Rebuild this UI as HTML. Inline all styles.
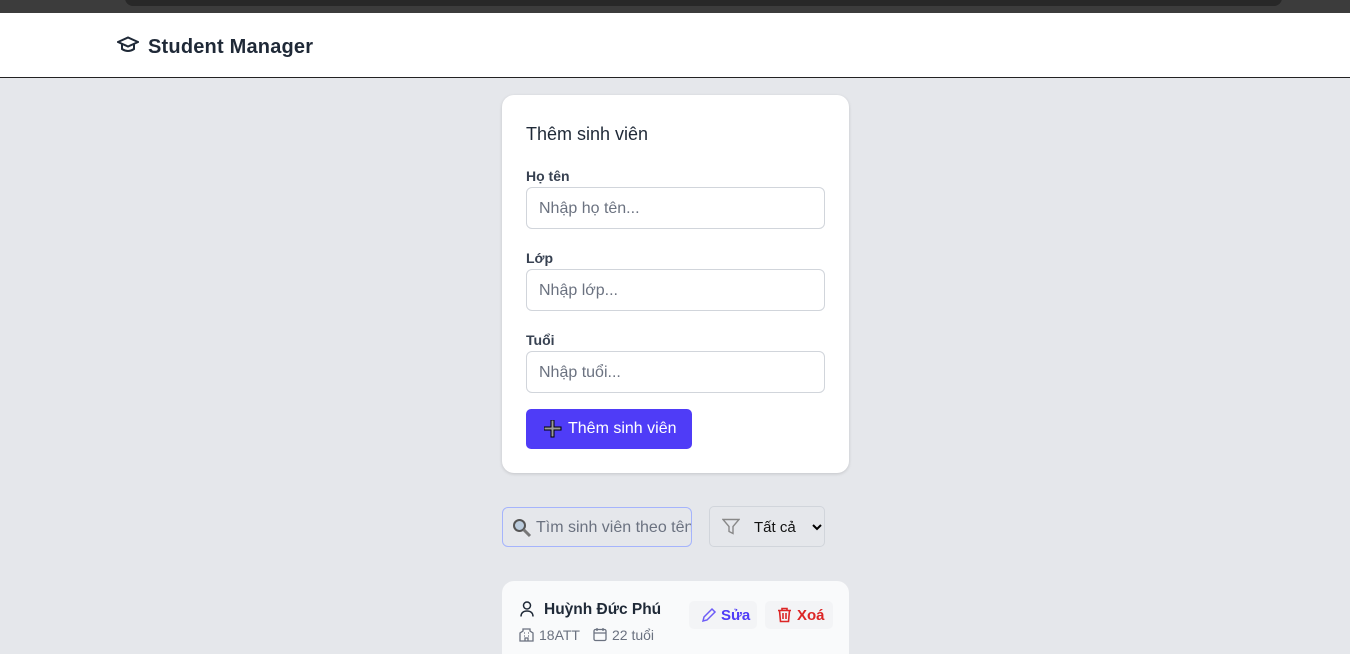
<!DOCTYPE html>
<html><head><meta charset="utf-8"><style>
*{box-sizing:border-box;margin:0;padding:0}
html,body{width:1350px;height:654px;overflow:hidden}
body{background:#e5e7eb;font-family:"Liberation Sans","DejaVu Sans",sans-serif;position:relative;color:#1f2937}
.top{position:absolute;left:0;top:0;width:1350px;height:13px;background:#3c3c3c}
.top .bar{position:absolute;left:125px;top:-10px;width:1157px;height:16px;background:#282828;border-radius:8px}
.hdr{position:absolute;top:13px;left:0;width:1350px;height:65px;background:#fff;border-bottom:1px solid #222}
.hdr .t{position:absolute;left:148px;top:23px;font-size:20px;font-weight:bold;color:#1f2937;letter-spacing:0.2px}
.hdr svg{position:absolute;left:117px;top:23px}
.card{position:absolute;left:502px;top:95px;width:347px;height:378px;background:#fff;border-radius:12px;box-shadow:0 1px 3px rgba(0,0,0,.15)}
h2{position:absolute;left:24px;top:29px;font-size:18px;font-weight:normal;color:#1f2937}
.lb{position:absolute;left:24px;font-size:14px;font-weight:bold;color:#374151}
.in{position:absolute;left:24px;width:299px;height:42px;border:1px solid #d1d5db;border-radius:6px;font-size:16px;color:#6b7280;padding:12px 12px;font-weight:300}
.btn{position:absolute;left:24px;top:314px;width:166px;height:40px;background:#4f3cf7;border-radius:5px;color:#fff;font-size:16px;padding:11px 0 0 42px}
.btn .p{position:absolute;left:18px;top:11px;width:18px;height:18px}
.search{position:absolute;left:502px;top:507px;width:190px;height:40px;border:1px solid #a5b4fc;border-radius:6px;background:#e5e7eb;font-size:16px;color:#6b7280;padding:11px 0 0 33px;white-space:nowrap;overflow:hidden}
.sel{position:absolute;left:709px;top:506px;width:116px;height:41px;border:1px solid #d1d5db;border-radius:5px;font-size:15px;color:#111;padding:12px 0 0 44px}
.item{position:absolute;left:502px;top:581px;width:347px;height:90px;background:#f9fafb;border-radius:12px}
.nm{position:absolute;left:42px;top:20px;font-size:15.5px;font-weight:bold;color:#1f2937}
.meta{position:absolute;top:46px;font-size:14px;color:#6b7280}
.b2{position:absolute;top:20px;height:28px;background:#f3f4f6;border-radius:5px;font-size:15px;font-weight:bold;padding:6px 0 0 32px}
</style></head><body>
<div class="top"><div class="bar"></div></div>
<div class="hdr">
<svg width="22" height="18" viewBox="0 0 22 18" fill="none" stroke="#1f2937" stroke-width="2"><path d="M1 6 L11 1.5 L21 6 L11 10.5 Z"/><path d="M5 8 V13 Q11 17 17 13 V8"/></svg>
<div class="t">Student Manager</div></div>
<div class="card">
<h2>Thêm sinh viên</h2>
<div class="lb" style="top:73px">Họ tên</div>
<div class="in" style="top:92px">Nhập họ tên...</div>
<div class="lb" style="top:155px">Lớp</div>
<div class="in" style="top:174px">Nhập lớp...</div>
<div class="lb" style="top:237px">Tuổi</div>
<div class="in" style="top:256px">Nhập tuổi...</div>
<div class="btn"><svg class="p" viewBox="0 0 18 18"><path d="M7 0h3v7h7v3h-7v7h-3v-7h-7v-3h7z" fill="#999" stroke="#000" stroke-width="1"/></svg>Thêm sinh viên</div>
</div>
<div class="search"><svg style="position:absolute;left:9px;top:10px" width="20" height="20" viewBox="0 0 20 20"><circle cx="7.5" cy="7.5" r="5.5" fill="#bcd" stroke="#555" stroke-width="2"/><path d="M11.5 11.5 L18 18" stroke="#777" stroke-width="3"/></svg>Tìm sinh viên theo tên</div>
<div class="sel"><svg style="position:absolute;left:12px;top:11px" width="18" height="18" viewBox="0 0 18 18" fill="none" stroke="#888" stroke-width="1.4"><path d="M1 1.5h16l-6 7v7l-4-2v-5z"/></svg>Tất cả<svg style="position:absolute;left:102px;top:16px" width="10" height="8" viewBox="0 0 10 8"><path d="M1 2l4 4 4-4" stroke="#000" stroke-width="2" fill="none"/></svg></div>
<div class="item">
<svg style="position:absolute;left:18px;top:20px" width="14" height="16" viewBox="0 0 14 16" fill="none" stroke="#1f2937" stroke-width="1.5"><circle cx="7" cy="4.5" r="3.5"/><path d="M1 15.5c0-4 3-5.5 6-5.5s6 1.5 6 5.5"/></svg>
<div class="nm">Huỳnh Đức Phú</div>
<svg style="position:absolute;left:17px;top:46px" width="15" height="15" viewBox="0 0 15 15" fill="none" stroke="#6b7280" stroke-width="1.3"><path d="M1 14V6l3-2V2h7v2l3 2v8zM6 14v-3h3v3M5 6h1M9 6h1M5 9h1M9 9h1"/></svg>
<div class="meta" style="left:37px">18ATT</div>
<svg style="position:absolute;left:91px;top:46px" width="14" height="15" viewBox="0 0 14 15" fill="none" stroke="#6b7280" stroke-width="1.3"><rect x="1" y="2.5" width="12" height="11" rx="1.5"/><path d="M1 6h12M4 1v3M10 1v3"/></svg>
<div class="meta" style="left:110px">22 tuổi</div>
<div class="b2" style="left:187px;width:68px;color:#4f3cf7"><svg style="position:absolute;left:12px;top:6px" width="16" height="16" viewBox="0 0 16 16" fill="none" stroke="#6d5cf7" stroke-width="1.5"><path d="M2 14l1-4 8-8 3 3-8 8z"/></svg>Sửa</div>
<div class="b2" style="left:263px;width:68px;color:#dc2626"><svg style="position:absolute;left:12px;top:6px" width="15" height="16" viewBox="0 0 15 16" fill="none" stroke="#dc2626" stroke-width="1.6"><path d="M1 3.5h13M5 3.5V1.5h5v2M2.5 3.5l1 11h8l1-11M6 6v6M9 6v6"/></svg>Xoá</div>
</div>
</body></html>
